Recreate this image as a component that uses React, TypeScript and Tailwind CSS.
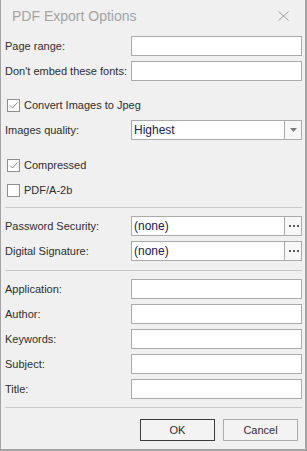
import { type ReactNode } from "react";

const font = { fontFamily: '"Liberation Sans", Arial, sans-serif' };

function TextField({ value }: { value?: string }) {
  return (
    <div className="flex h-5 w-[171px] items-center border border-[#ababab] bg-white pl-[2px] text-[12px] text-[#202050]">
      {value}
    </div>
  );
}

function ButtonField({ value, kind }: { value: string; kind: "combo" | "dots" }) {
  return (
    <div className="flex h-5 w-[171px] border border-[#ababab] bg-white text-[12px] text-[#202050]">
      <div className="flex flex-1 items-center pl-[2px]">{value}</div>
      <div className="flex w-[17px] items-center justify-center border-l border-[#ababab] bg-[#f7f7f7]">
        {kind === "combo" ? (
          <svg width="7" height="4" viewBox="0 0 7 4">
            <path d="M0 0h7L3.5 4z" fill="#7b7b7b" />
          </svg>
        ) : (
          <svg width="11" height="2" viewBox="0 0 11 2">
            <rect x="1" y="0" width="2" height="2" fill="#5a5a5a" />
            <rect x="5" y="0" width="2" height="2" fill="#5a5a5a" />
            <rect x="9" y="0" width="2" height="2" fill="#5a5a5a" />
          </svg>
        )}
      </div>
    </div>
  );
}

function Row({ label, children, className }: { label: string; children: ReactNode; className?: string }) {
  return (
    <div className={`flex h-5 items-center justify-between ${className ?? ""}`}>
      <span>{label}</span>
      {children}
    </div>
  );
}

function Check({ label, checked, className }: { label: string; checked?: boolean; className?: string }) {
  return (
    <div className={`flex h-[13px] items-center gap-[4px] pl-[2px] ${className ?? ""}`}>
      <span className="flex h-[13px] w-[13px] items-center justify-center border border-[#8e8e8e] bg-white">
        {checked && (
          <svg width="11" height="11" viewBox="0 0 11 11">
            <path d="M2 5.5l2.5 2.5L9.5 2.5" fill="none" stroke="#7a7a7a" strokeWidth="0.9" />
          </svg>
        )}
      </span>
      <span>{label}</span>
    </div>
  );
}

function Separator({ className }: { className?: string }) {
  return <div className={`h-px bg-[#c8c8c8] ${className ?? ""}`} />;
}

export default function App() {
  return (
    <div
      className="flex h-[451px] w-[307px] flex-col border-l border-r-2 border-b-2 border-[#a3a3a3] bg-[#f0f0f0] text-[11px] text-[#2e2e2e]"
      style={font}
    >
      <div className="flex h-8 items-center justify-between pl-[11px] pr-4">
        <span className="text-[14px] text-[#a3a3a3]">PDF Export Options</span>
        <svg width="11" height="10" viewBox="0 0 11 10">
          <path d="M0.5 0.5l10 9M10.5 0.5l-10 9" stroke="#a0a0a0" strokeWidth="1" />
        </svg>
      </div>

      <div className="flex flex-col pl-1 pr-[3px]">
        <Row label="Page range:" className="mt-1">
          <TextField />
        </Row>
        <Row label="Don't embed these fonts:" className="mt-[5px]">
          <TextField />
        </Row>

        <Check label="Convert Images to Jpeg" checked className="mt-[18px]" />
        <Row label="Images quality:" className="mt-2">
          <ButtonField value="Highest" kind="combo" />
        </Row>

        <Check label="Compressed" checked className="mt-[19px]" />
        <Check label="PDF/A-2b" className="mt-3" />

        <Separator className="mt-[10px]" />

        <Row label="Password Security:" className="mt-2">
          <ButtonField value="(none)" kind="dots" />
        </Row>
        <Row label="Digital Signature:" className="mt-[5px]">
          <ButtonField value="(none)" kind="dots" />
        </Row>

        <Separator className="mt-[9px]" />

        <Row label="Application:" className="mt-2">
          <TextField />
        </Row>
        <Row label="Author:" className="mt-[5px]">
          <TextField />
        </Row>
        <Row label="Keywords:" className="mt-[5px]">
          <TextField />
        </Row>
        <Row label="Subject:" className="mt-[5px]">
          <TextField />
        </Row>
        <Row label="Title:" className="mt-[5px]">
          <TextField />
        </Row>

        <Separator className="mt-2" />

        <div className="mt-[11px] flex justify-end gap-2 pr-1">
          <button
            type="button"
            className="h-[22px] w-[75px] border border-[#3c3c3c] bg-[#f3f3f3] text-[11px] text-[#2e2e2e]"
          >
            OK
          </button>
          <button
            type="button"
            className="h-[22px] w-[75px] border border-[#adadad] bg-[#f3f3f3] text-[11px] text-[#2e2e2e]"
          >
            Cancel
          </button>
        </div>
      </div>
    </div>
  );
}
